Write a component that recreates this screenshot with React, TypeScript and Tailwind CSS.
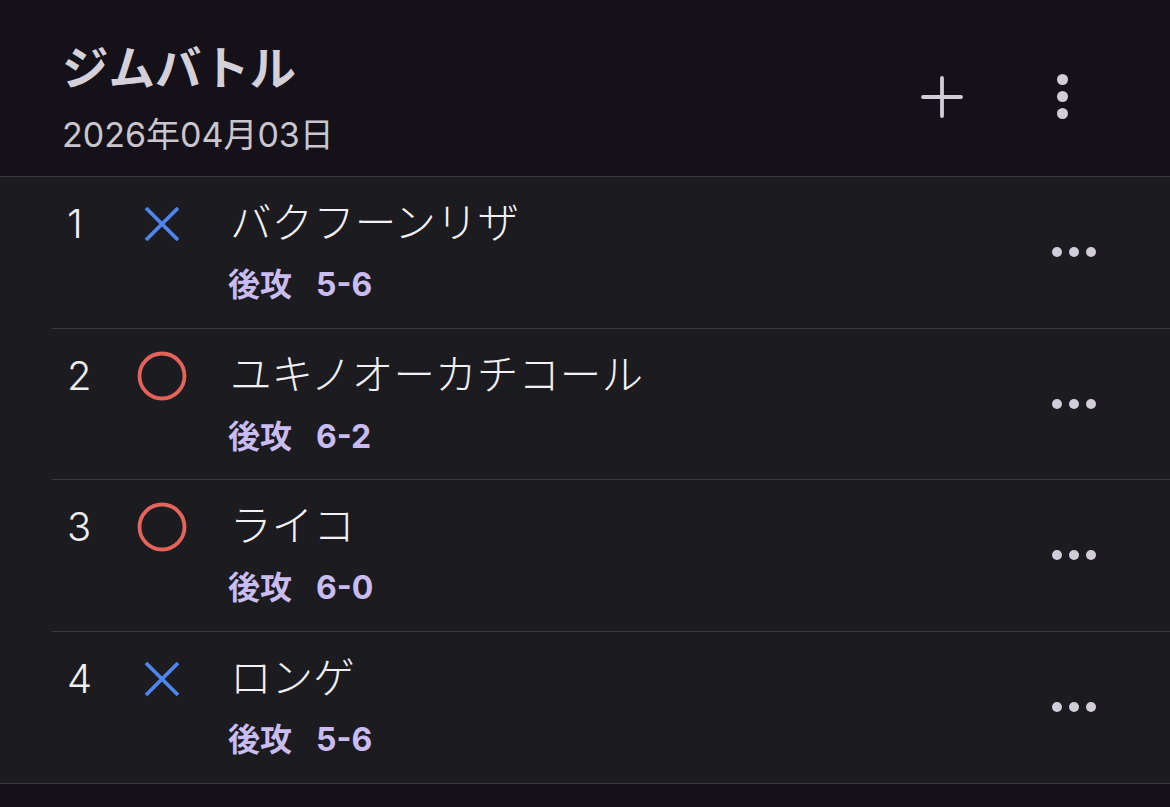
import React from 'react';

type Battle = {
  no: number;
  win: boolean;
  name: string;
  order: string;
  score: string;
};

const BATTLES: Battle[] = [
  { no: 1, win: false, name: 'バクフーンリザ', order: '後攻', score: '5-6' },
  { no: 2, win: true, name: 'ユキノオーカチコール', order: '後攻', score: '6-2' },
  { no: 3, win: true, name: 'ライコ', order: '後攻', score: '6-0' },
  { no: 4, win: false, name: 'ロンゲ', order: '後攻', score: '5-6' },
];

const FONT = { fontFamily: '"Inter", "Noto Sans CJK JP", sans-serif' };

function ResultMark({ win }: { win: boolean }) {
  if (win) {
    return (
      <svg width="52" height="52" viewBox="0 0 52 52">
        <circle cx="26" cy="26" r="22.5" fill="none" stroke="#e4635a" strokeWidth="3.8" />
      </svg>
    );
  }
  return (
    <svg width="36" height="36" viewBox="0 0 36 36">
      <path d="M2 2 L34 34 M34 2 L2 34" stroke="#4d86ee" strokeWidth="3.8" strokeLinecap="butt" />
    </svg>
  );
}

function Row({ battle, last }: { battle: Battle; last: boolean }) {
  return (
    <div className="pl-[52px]">
      <div
        className={`flex h-[151.5px] items-center pr-[74px] ${
          last ? '' : 'border-b border-[#38373c]'
        }`}
      >
        <div className="flex flex-1 flex-col self-start pt-[24px]">
          <div className="flex h-[46px] items-center">
            <div className="w-[74px] pl-[15px] text-[40px] font-light leading-none text-[#f1eff4]">
              {battle.no}
            </div>
            <div className="flex w-[72px] items-center justify-center">
              <ResultMark win={battle.win} />
            </div>
            <div className="ml-[32px] text-[41.6px] font-light leading-none text-[#f3f1f5]">
              {battle.name}
            </div>
          </div>
          <div className="ml-[176px] mt-[18px] flex h-[40px] items-center gap-[24px] text-[32px] font-bold leading-none text-[#c9bcf3]">
            <span>{battle.order}</span>
            <span>{battle.score}</span>
          </div>
        </div>
        <div className="flex items-center gap-[7px]">
          <span className="h-[10px] w-[10px] rounded-full bg-[#d0ccd8]" />
          <span className="h-[10px] w-[10px] rounded-full bg-[#d0ccd8]" />
          <span className="h-[10px] w-[10px] rounded-full bg-[#d0ccd8]" />
        </div>
      </div>
    </div>
  );
}

export default function App() {
  return (
    <div className="min-h-screen bg-[#141218]" style={FONT}>
      <header className="flex h-[177px] items-start justify-between border-b border-[#38373c] pl-[62px] pr-[102px]">
        <div className="pt-[40px]">
          <h1 className="text-[46.5px] font-semibold leading-[56px] text-[#d4d0da]">ジムバトル</h1>
          <p className="mt-[17px] text-[34px] leading-[44px] text-[#cac5cf]">2026年04月03日</p>
        </div>
        <div className="flex items-center gap-[94px] pt-[74px]">
          <svg width="42" height="42" viewBox="0 0 42 42">
            <path d="M21 2 V40 M2 21 H40" stroke="#d0ccd8" strokeWidth="3.8" strokeLinecap="round" />
          </svg>
          <div className="flex flex-col items-center gap-[6px]">
            <span className="h-[11px] w-[11px] rounded-full bg-[#d0ccd8]" />
            <span className="h-[11px] w-[11px] rounded-full bg-[#d0ccd8]" />
            <span className="h-[11px] w-[11px] rounded-full bg-[#d0ccd8]" />
          </div>
        </div>
      </header>
      <main className="border-b border-[#38373c] bg-[#1c1b1f]">
        {BATTLES.map((b, i) => (
          <Row key={b.no} battle={b} last={i === BATTLES.length - 1} />
        ))}
      </main>
    </div>
  );
}
